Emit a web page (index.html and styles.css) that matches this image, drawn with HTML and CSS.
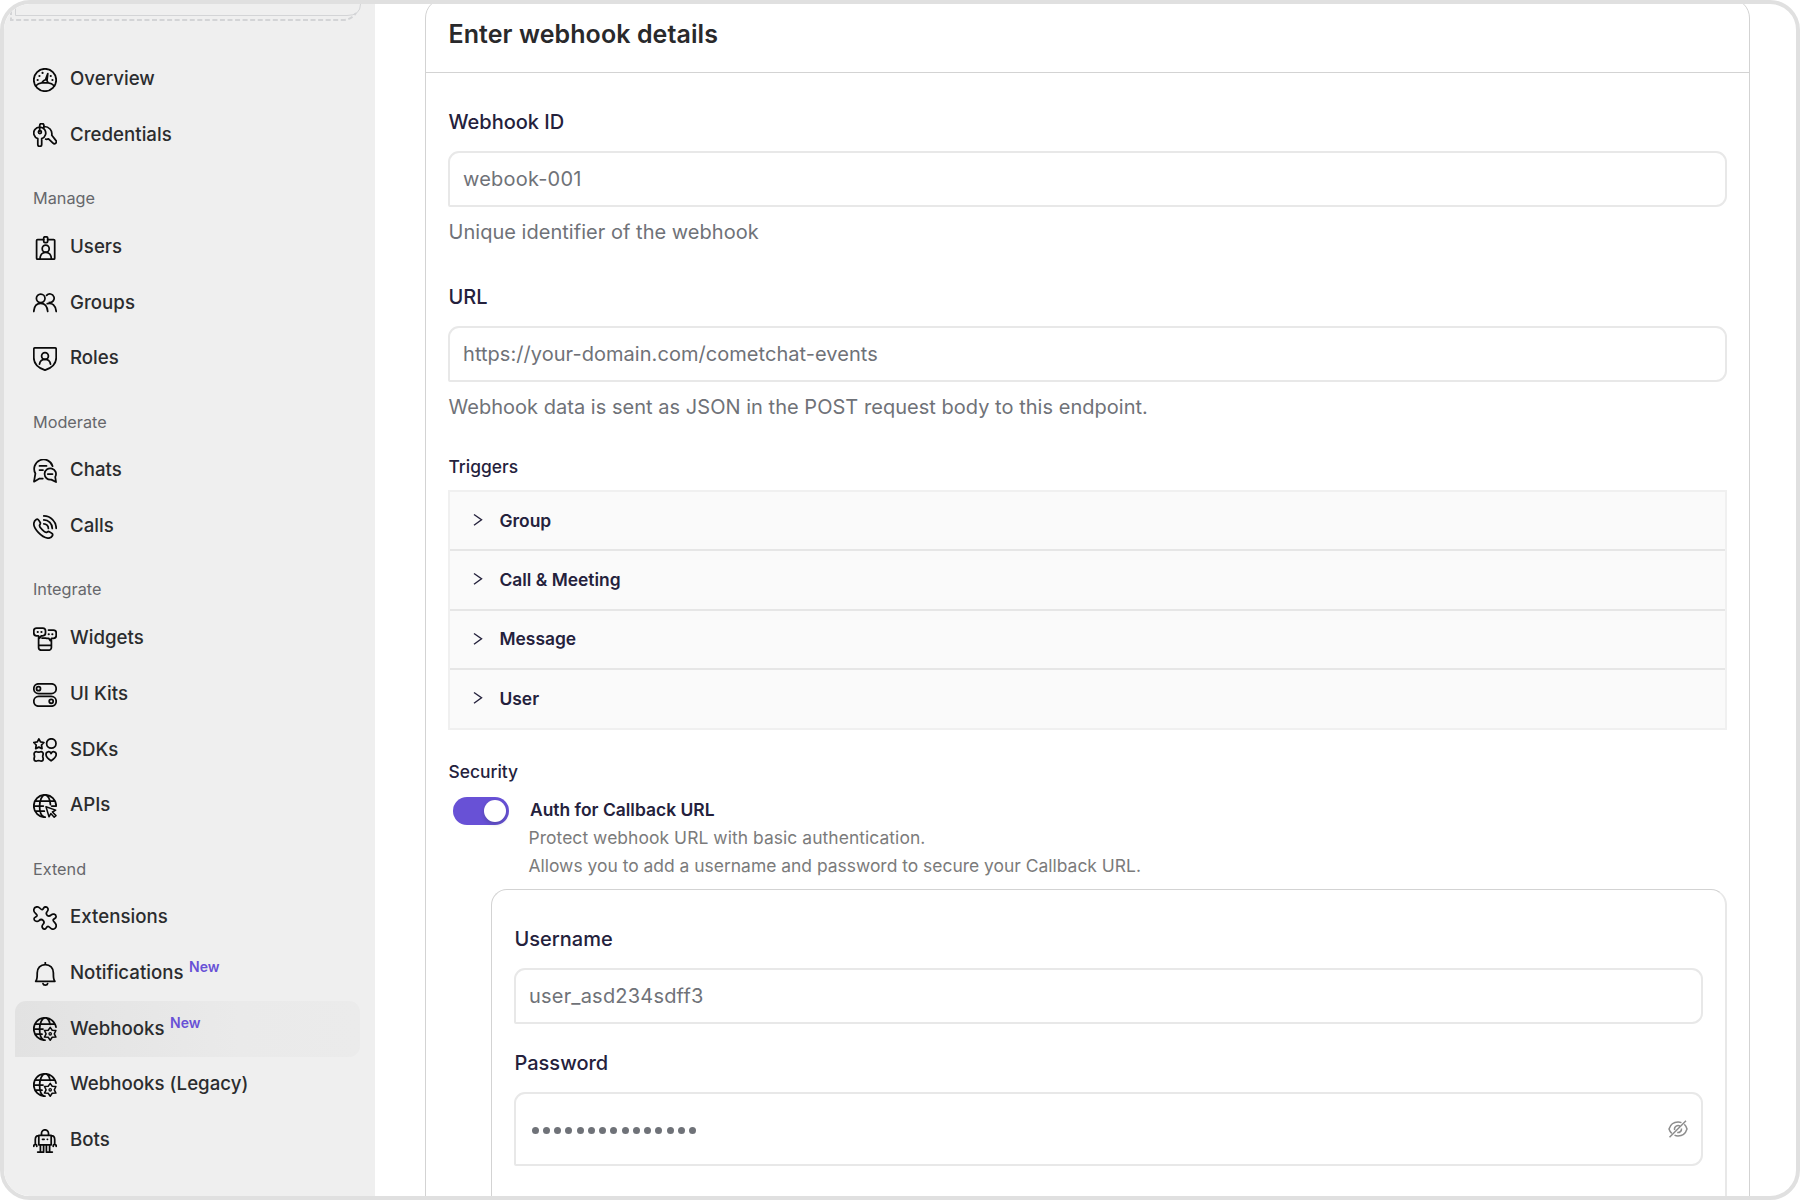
FILE: index.html
```html
<!DOCTYPE html>
<html lang="en">
<head>
<meta charset="utf-8">
<title>Webhooks</title>
<link rel="stylesheet" href="styles.css">
</head>
<body>
<svg class="sprite" width="0" height="0">
  <symbol id="globe-gear" viewBox="0 0 24 24">
    <path d="M12 23.200A11.200 11.200 0 1 1 23 10.200M10.500 22.800C8.200 21.600 6.600 17.500 6.600 12S9 .8 12 .8c2.400 0 4.400 3 5.100 6.500M2.300 7h19.500M.8 12h9.200M2.300 17.200h6.700"/>
    <path stroke-width="1.500" d="M17.200 10.400L19.200 13.300L22.900 13.500L21.300 16.800L22.900 20.100L19.200 20.300L17.200 23.200L15.200 20.300L11.500 20.100L13.100 16.800L11.500 13.500L15.200 13.300z"/>
    <circle stroke-width="1.300" cx="17.200" cy="16.800" r="1.200"/>
  </symbol>
</svg>
<div class="window">
  <aside class="sidebar">
    <svg class="app-picker" viewBox="0 0 352 17"><path class="inner" d="M5.500 0V11.500H337Q350.500 11.500 350.500 0"/><path class="outer" d="M1 6V16H333Q341 16 346 9"/></svg>
    <nav class="nav">
      <a class="item"><svg class="icon" viewBox="0 0 24 24"><circle cx="12" cy="12" r="11.200"/><path d="M2.500 18c2-2 4-3 6.300-3.200h6.400c2.300.2 4.300 1.200 6.300 3.200M8.800 14.800l1.700-2 2-1 2.300-6.200-.8 7 1.200 2.200"/><path class="dots" d="M4.600 12h.1M6.400 8h.1M9.500 4.900h.1M17.700 8h.1M19.400 12h.1"/></svg>Overview</a>
      <a class="item"><svg class="icon" viewBox="0 0 24 24"><path d="M4.800 15.700A6 6 0 1 1 8.700 15.700V21.400a1.950 1.950 0 0 1-3.900 0zM6.700 8V2.600a2.100 2.100 0 0 1 4.200 0V5"/><circle cx="6.900" cy="9" r="1.500"/><path d="M11 3.500c5 .2 8.500 3.500 7.800 8.700l4 5.200a1.900 1.900 0 0 1-2.800 2.700l-4.500-4.300c-1 .5-1.800.6-2.800.4"/></svg>Credentials</a>
      <h2 class="heading">Manage</h2>
      <a class="item"><svg class="icon" viewBox="0 0 24 24"><path d="M10.700 3.500H4.600a1 1 0 0 0-1 1v17.700a1 1 0 0 0 1 1h16.100a1 1 0 0 0 1-1V4.500a1 1 0 0 0-1-1H14.700M6.900 23c.2-4 2.500-6.700 5.800-6.700s5.600 2.700 5.800 6.700"/><rect x="10.700" y=".8" width="4" height="5.700" rx="1.300"/><circle cx="12.700" cy="12.700" r="3.500"/></svg>Users</a>
      <a class="item"><svg class="icon" viewBox="0 0 24 24"><circle cx="7.700" cy="7.300" r="4.300"/><path d="M.8 20.500c.3-5 2.900-8.200 6.900-8.200s6.600 3.200 7 8.200M13.600 4.400a4.300 4.300 0 1 1 2.700 7.100M14.300 12.700c5-1.400 8.500 2 8.900 7.800"/></svg>Groups</a>
      <a class="item"><svg class="icon" viewBox="0 0 24 24"><path d="M2 .9h20a1.200 1.200 0 0 1 1.200 1.200v8.700c0 6.300-5.200 10.400-11.200 12.400C6 21.200.8 17.100.8 10.800V2.100A1.200 1.200 0 0 1 2 .9zM6.500 17.200c.4-3.200 2.500-4.800 5.500-4.800s5.100 1.600 5.500 4.800"/><circle cx="12" cy="9" r="3.400"/></svg>Roles</a>
      <h2 class="heading">Moderate</h2>
      <a class="item"><svg class="icon" viewBox="0 0 24 24"><path d="M19.600 7.200A9.400 9.400 0 1 0 2.400 14.500L1 22.700l5.500-3.200 3.300.2M6.500 6.900h7M6.500 11h3.500M14.800 15h4.700"/><path d="M22.200 17.900A5.700 5.700 0 1 0 18.300 20.600L23 23z"/></svg>Chats</a>
      <a class="item"><svg class="icon" viewBox="0 0 24 24"><path d="M3.200 4.500c1.500-.9 2.500.2 4 3 .8 1.600-.6 2-.7 3.200-.1 1.500 5 6.700 6.600 6.700 1.200 0 1.700-1.500 3.200-.7 2.700 1.500 4 2.400 3.100 4-1 1.800-2.600 2.700-4.700 2.400C8.300 22.200.6 13.500.8 8.800c.1-1.900 1-3.500 2.400-4.300zM10.800.9a12.400 12.400 0 0 1 12.400 12.400M10.800 4.900a8.500 8.500 0 0 1 8.500 8.500M10.800 8.800a4.600 4.600 0 0 1 4.600 4.600"/></svg>Calls</a>
      <h2 class="heading">Integrate</h2>
      <a class="item"><svg class="icon" viewBox="0 0 24 24"><path d="M3.500 1h6.300a2.700 2.700 0 0 1 2.700 2.700v2.400a2.700 2.700 0 0 1-2.700 2.700H8.300L6.800 11 5.300 8.800H3.500A2.700 2.700 0 0 1 .8 6.100V3.700A2.700 2.700 0 0 1 3.500 1zM15.500 3h5a2.700 2.700 0 0 1 2.700 2.700V8.600a2.700 2.700 0 0 1-2.700 2.700H18.700L17.200 13.600l-1.500-2.300H13.200M5.600 10.500V20.600a2.600 2.600 0 0 0 2.600 2.600h7.600a2.600 2.600 0 0 0 2.600-2.600V13M6 18.400h12M9 11h4"/><path class="dots" d="M4.700 5h.1M8.400 5h.1M15.700 7.300h.1M19.300 7.300h.1"/></svg>Widgets</a>
      <a class="item"><svg class="icon" viewBox="0 0 24 24"><rect x=".8" y=".8" width="22.400" height="9.800" rx="4.900"/><rect x=".8" y="13.400" width="22.400" height="9.800" rx="4.900"/><circle cx="5.500" cy="5.700" r="2"/><circle cx="18.200" cy="18.300" r="2"/></svg>UI Kits</a>
      <a class="item"><svg class="icon" viewBox="0 0 24 24"><path d="M5.900.9l1.600 3 3.400.6-2.400 2.500.5 3.600-3.100-1.500-3.200 1.500.5-3.600L.8 4.500l3.500-.6z"/><circle cx="18.300" cy="5.500" r="4.700"/><path d="M3.200 13.700c1 0 1.500.5 2.400.5s1.500-.5 2.500-.5a2.100 2.100 0 0 1 2.100 2.100c0 1-.5 1.700-.5 2.600s.5 1.500.5 2.500a2.100 2.100 0 0 1-2.100 2.100c-1 0-1.600-.5-2.500-.5s-1.400.5-2.400.5a2.100 2.100 0 0 1-2.100-2.100c0-1 .4-1.600.4-2.500s-.4-1.600-.4-2.600a2.100 2.100 0 0 1 2.100-2.100zM18.100 22.800c-2.500-1.700-5.100-4-5.100-6.400 0-3 3.700-3.700 5.100-.9 1.400-2.800 5.100-2.100 5.100.9 0 2.400-2.600 4.700-5.100 6.400z"/></svg>SDKs</a>
      <a class="item"><svg class="icon" viewBox="0 0 24 24"><path d="M12.200 23.200A11.200 11.200 0 1 1 23.200 12M11 22.900C8.300 21.900 6.600 17.500 6.600 12S9 .8 12 .8s5.300 5 5.400 9.800M2.300 7.100h19.400M.8 12h9.500M23.200 12h-4.500M2.300 17.200h9"/><path stroke-width="1.500" d="M13 12.700l9.700 3.400-3.300 1.900 3.600 3.600-1.800 1.600-3.400-3.600-1.800 3.200z"/></svg>APIs</a>
      <h2 class="heading">Extend</h2>
      <a class="item"><svg class="icon" viewBox="0 0 24 24"><path d="M9.200 3.600c1.500-.3 1.300-2.800 3.300-2.800 2.600.2 3.300 3 1.700 4.700-1 1.200-1.200 2.800.2 4 1.200.9 2.600.5 3.700-.5 1.700-1.700 4.700-1 5 1.500.2 2.200-2.600 1.900-3 3.500-.3 1.500 3.100 3 3.100 5.500 0 2-1.500 3.700-3.600 3.700-2.200 0-3.200-3.200-4.700-2.900-1.700.3-1.300 2.900-3.400 2.900-2.600-.3-3-3.200-1.600-4.700 1.200-1.200 1.400-2.900.2-4.100-1.200-1.200-2.900-1-4.100.2-1.500 1.400-4.700.9-5-1.600-.1-2.200 2.500-1.800 3-3.300.4-1.500-3.200-2.600-3.200-5.300C.8 2.300 2.300.8 4.300.8c2.500 0 3.400 3.200 4.900 2.800z"/></svg>Extensions</a>
      <a class="item"><svg class="icon" viewBox="0 0 24 24"><path d="M12.300.5v2M2.700 19.300h19.200c-1.700-1.900-1.500-3.700-1.500-8.300 0-5-3.300-8.400-8.100-8.400S4.200 6 4.200 11c0 4.600.2 6.400-1.500 8.300zM10 21.600c.3 2 4.300 2 4.600 0"/></svg>Notifications<sup class="tag">New</sup></a>
      <a class="item active"><svg class="icon"><use href="#globe-gear"/></svg>Webhooks<sup class="tag">New</sup></a>
      <a class="item"><svg class="icon"><use href="#globe-gear"/></svg>Webhooks (Legacy)</a>
      <a class="item"><svg class="icon" viewBox="0 0 24 24"><path d="M8.500 6V4.300a3.500 3.500 0 0 1 7 0V6M5.800 6.300h12.400v9.500H5.800zM5.700 6.700C3 6.700 2.300 8 2.300 10.500V15M18.300 6.700c2.700 0 3.400 1.300 3.400 3.800V15M.8 17.300c0-1.300.7-2 1.500-2s1.500.7 1.500 2M20.200 17.300c0-1.300.7-2 1.500-2s1.500.7 1.500 2M7.400 15.800v6.900M10.600 15.800v6.900M13.400 15.800v6.900M16.600 15.800v6.900M4.700 23.100h6M13.300 23.100h6M9.500 10.300h1.600M14.300 10.300h.2"/></svg>Bots</a>
    </nav>
  </aside>
  <main class="main">
    <section class="card">
      <h1 class="card-title">Enter webhook details</h1>
      <div class="card-body">
        <label class="label">Webhook ID</label>
        <div class="input">webook-001</div>
        <p class="hint">Unique identifier of the webhook</p>
        <label class="label">URL</label>
        <div class="input url">https://your-domain.com/cometchat-events</div>
        <p class="hint">Webhook data is sent as JSON in the POST request body to this endpoint.</p>
        <h3 class="subhead triggers-head">Triggers</h3>
        <div class="triggers">
          <div class="trigger"><svg class="chevron" viewBox="0 0 10 14"><path d="M1 1.500l7.500 5.300L1 12.200"/></svg>Group</div>
          <div class="trigger"><svg class="chevron" viewBox="0 0 10 14"><path d="M1 1.500l7.500 5.300L1 12.200"/></svg>Call &amp; Meeting</div>
          <div class="trigger"><svg class="chevron" viewBox="0 0 10 14"><path d="M1 1.500l7.500 5.300L1 12.200"/></svg>Message</div>
          <div class="trigger"><svg class="chevron" viewBox="0 0 10 14"><path d="M1 1.500l7.500 5.300L1 12.200"/></svg>User</div>
        </div>
        <h3 class="subhead security-head">Security</h3>
        <div class="auth">
          <div class="toggle"><div class="knob"></div></div>
          <div class="auth-text">
            <h4>Auth for Callback URL</h4>
            <p class="protect">Protect webhook URL with basic authentication.</p>
            <p>Allows you to add a username and password to secure your Callback URL.</p>
          </div>
        </div>
        <div class="login">
          <label class="label">Username</label>
          <div class="input">user_asd234sdff3</div>
          <label class="label password-label">Password</label>
          <div class="input password">
            <div class="mask"><i></i><i></i><i></i><i></i><i></i><i></i><i></i><i></i><i></i><i></i><i></i><i></i><i></i><i></i><i></i></div>
            <svg class="eye" viewBox="0 0 20 18"><path d="M13.500 2.600A9.600 9.600 0 0 0 10 2C5.500 2 2.200 5.200 1 9c.5 1.700 1.500 3.200 2.800 4.400M16.300 4.200C17.500 5.300 18.500 7 19 9c-1.200 3.800-4.500 7-9 7-1.300 0-2.500-.3-3.500-.8M12.300 6.300A3.600 3.600 0 0 0 6.600 10M13.500 8.500a3.600 3.600 0 0 1-4.300 4M18 .8L1.500 17.200"/></svg>
          </div>
        </div>
      </div>
    </section>
  </main>
</div>
</body>
</html>
```
FILE: styles.css
```css
* { box-sizing: border-box; }
body, h1, h2, h3, h4, p { margin: 0; font-weight: inherit; }
body { width: 1800px; height: 1200px; overflow: hidden; background: #fff; font-family: Inter, "Liberation Sans", sans-serif; }
.sprite { display: block; height: 0; }

.window { display: flex; width: 1800px; height: 1200px; border: 4px solid #e0e0e0; border-radius: 30px; overflow: hidden; background: #fff; }

.sidebar { width: 371px; flex: none; background: #efefef; padding: 0 15px 0 6px; }
.app-picker { display: block; width: 352px; height: 17px; margin-right: -2px; fill: none; }
.app-picker .inner { stroke: #d3d4d6; stroke-width: 1; }
.app-picker .outer { stroke: #d3d4d6; stroke-width: 2; stroke-dasharray: 5 2.550; }
.nav { padding: 30.200px 0 0 5px; }
.item { display: flex; align-items: center; height: 55.650px; padding: 0 0 2px 18px; font-size: 18.650px; font-weight: 500; line-height: 24px; letter-spacing: .02px; color: #2b2c2e; border-radius: 11px 11px 11px 0; }
.icon { flex: none; width: 24px; height: 24px; margin: 3.500px 13px 0 0; fill: none; stroke: #0a0a0a; stroke-width: 1.750; stroke-linejoin: round; stroke-linecap: round; }
.dots { stroke-width: 2.100; }
.heading { height: 56.600px; padding: 23.600px 0 0 18px; font-size: 16.250px; line-height: 24px; color: #66676b; }
.active { background: linear-gradient(90deg, #e2e2e2, #eaeaea 65%, #ebebeb); }
.tag { align-self: flex-start; margin: 12px 0 0 5.500px; font-size: 14px; line-height: 20px; font-weight: 600; color: #6851d6; vertical-align: baseline; }

.main { flex: 1; padding: 0 46px 0 50px; }
.card { width: 1325px; height: 1250px; margin-top: -6px; border: 1px solid #d3d3d3; border-radius: 20px; }
.card-title { height: 74px; padding: 22px 0 0 22.500px; border-bottom: 1px solid #d3d3d3; font-size: 25px; line-height: 26px; font-weight: 600; letter-spacing: .08px; color: #29292b; }
.card-body { padding: 34px 22px 0; }
.label { display: block; height: 44px; padding-left: .5px; font-size: 20px; line-height: 30px; font-weight: 500; color: #24213c; }
.input { display: flex; align-items: center; height: 56px; padding: 0 13px; border: 2px solid #e8e8e8; border-radius: 11px 11px 11px 2px; font-size: 20px; letter-spacing: .2px; color: #6f7278; }
.url { letter-spacing: .05px; }
.hint { height: 75px; padding: 10px 0 0 .5px; font-size: 20px; line-height: 30px; letter-spacing: .03px; color: #6f7278; }
.subhead { padding-left: .5px; font-size: 17.400px; line-height: 20px; font-weight: 500; color: #24213c; }
.triggers-head { height: 33px; }
.triggers { border: 2px solid #f0f0f0; background: #fafafa; }
.trigger { display: flex; align-items: center; gap: 17px; height: 59.500px; padding: 0 0 1px 22.500px; font-size: 17.400px; font-weight: 600; color: #24213c; }
.trigger:first-child { height: 57px; }
.trigger + .trigger { border-top: 2px solid #e6e6e6; }
.chevron { width: 10px; height: 14px; fill: none; stroke: #24213c; stroke-width: 1.400; }
.security-head { padding-top: 32.500px; height: 66.500px; }
.auth { display: flex; gap: 19.500px; padding-left: 5px; height: 93px; }
.toggle { width: 56px; height: 28px; margin-top: 1px; padding: 3px; border-radius: 14px; background: #6851d6; display: flex; justify-content: flex-end; }
.knob { width: 22px; height: 22px; border-radius: 50%; background: #fff; box-shadow: 0 2px 4px rgba(0, 35, 11, .2); }
.auth-text { font-size: 17.450px; line-height: 28px; color: #7b7b7b; }
.auth-text h4 { padding-left: 1.500px; font-weight: 600; color: #24213c; }
.auth-text .protect { letter-spacing: .06px; }
.login { margin-left: 43px; height: 400px; border: 1px solid #d3d3d3; border-right: 2px solid #e8e8e8; border-radius: 16px; padding: 34px 22px 0; }
.password-label { margin-top: 24px; }
.password { height: 74px; justify-content: space-between; }
.mask { display: flex; gap: 4.270px; padding: 2px 0 0 2.500px; }
.mask i { width: 7px; height: 7px; border-radius: 50%; background: #6f7278; }
.eye { width: 20px; height: 18px; fill: none; stroke: #8e8e8e; stroke-width: 1.500; }
```
